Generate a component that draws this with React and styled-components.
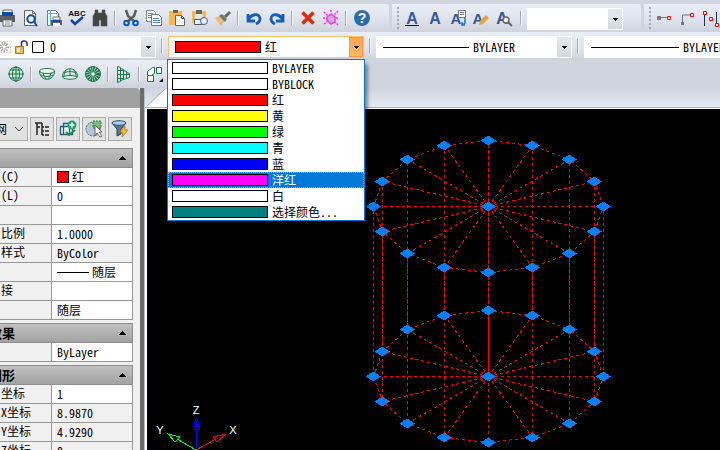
import React from "react";
import styled, { createGlobalStyle, css } from "styled-components";

const GlobalStyle = createGlobalStyle`
  * {
    box-sizing: border-box;
  }
  body {
    margin: 0;
    overflow: hidden;
  }
  body, button, input, select {
    color: #000;
    font-family: "Noto Sans CJK SC", "Liberation Sans", sans-serif;
    font-size: 12px;
    line-height: 16px;
    font-feature-settings: "hwid";
  }
`;

const Window = styled.div`
  display: flex;
  flex-direction: column;
  height: 100vh;
  overflow: hidden;
  padding-top: 4px;
  background: #d0d4dd;
`;

const Bars = styled.header`
  flex: none;
`;

const BarRow = styled.div`
  display: flex;
  gap: 3px;
  height: 28px;
`;

const Toolbar = styled.div`
  display: flex;
  align-items: center;
  flex: ${(props) => (props.$grow ? "1 0 auto" : "none")};
  height: 28px;
  padding: 0 ${(props) => props.$end || 0}px 0 ${(props) => props.$start || 0}px;
  margin-left: ${(props) => (props.$cut ? "-4px" : "0")};
  border-radius: 0 3px 3px 0;
  background: linear-gradient(#eaeef7, #dde1ea 60%, #ced2dc);
`;

const ToolButton = styled.button`
  display: flex;
  align-items: center;
  justify-content: center;
  flex: none;
  width: 23px;
  height: 24px;
  padding: 0;
  border: 0;
  background: none;
  &:hover {
    background: #ffe2b0;
  }
`;

const Separator = styled.span`
  flex: none;
  width: 2px;
  height: 14px;
  margin: 0 ${(props) => props.$gap || 3}px;
  border-left: 1px solid #a4a8b0;
  border-right: 1px solid #f8fafd;
`;

const Grip = styled.span`
  flex: none;
  width: 2px;
  height: 22px;
  margin: 0 1px 0 5px;
  background: repeating-linear-gradient(#a3a8b3 0 2px, transparent 2px 4px);
`;

const ComboBox = styled.div`
  display: flex;
  align-items: center;
  flex: none;
  position: relative;
  width: ${(props) => props.$width}px;
  height: 22px;
  margin-top: 2px;
  padding-left: 6px;
  border: 1px solid ${(props) => (props.$open ? "#ffbf69" : "#fff")};
  background: #fff;
  gap: 4px;
`;

const Choice = styled.select`
  flex: 1;
  min-width: 0;
  height: 20px;
  padding: 0;
  border: 0;
  outline: 0;
  appearance: none;
  background: transparent;
`;

const ComboArrow = styled.span`
  display: flex;
  align-items: center;
  justify-content: center;
  flex: none;
  width: 14px;
  height: 20px;
  background: linear-gradient(#e6e9f1, #d3d7e1);
  ${(props) =>
    props.$open &&
    css`
      border: 1px solid #ff9640;
      background: linear-gradient(#ffa851, #ffba66);
    `}
`;

const Swatch = styled.span`
  flex: none;
  width: ${(props) => props.$width}px;
  height: 12px;
  border: 1px solid #000;
  background: ${(props) => props.$color};
`;

const LineSample = styled.span`
  flex: none;
  width: ${(props) => props.$width}px;
  height: 1px;
  background: #000;
`;

const ColorMenu = styled.ul`
  position: absolute;
  z-index: 5;
  top: 22px;
  left: -2px;
  width: 198px;
  margin: 0;
  padding: 0;
  border: 1px solid #0078d7;
  background: #fff;
  box-shadow: 4px 4px 3px -1px rgba(0, 0, 0, 0.4);
  list-style: none;
`;

const ColorOption = styled.li`
  display: flex;
  align-items: center;
  gap: 4px;
  height: 16px;
  padding-left: 4px;
  color: ${(props) => (props.$active ? "#fff" : "#000")};
  background: ${(props) => (props.$active ? "#0078d7" : "#fff")};
  outline: ${(props) => (props.$active ? "1px dotted #ff9640" : "none")};
  outline-offset: -1px;
`;

const Workspace = styled.div`
  display: flex;
  flex: 1;
  min-height: 0;
`;

const Panel = styled.aside`
  flex: none;
  width: 144px;
  overflow: hidden;
  border-right: 4px solid #6b6b6b;
  background: #f0f0f0;
`;

const PanelTitle = styled.div`
  height: 20px;
  border-radius: 0 4px 0 0;
  background: #a1a1a1;
`;

const PanelTools = styled.div`
  display: flex;
  gap: 2px;
  padding: 8px 0 7px;
  border-top: 1px solid #fff;
`;

const FilterBox = styled.div`
  display: flex;
  align-items: center;
  width: 28px;
  height: 24px;
  padding-right: 3px;
  border: 1px solid #adadad;
  border-left: 0;
  overflow: hidden;
  background: #e1e1e1;
`;

const FilterChoice = styled(Choice)`
  text-indent: -5px;
`;

const PanelButton = styled.button`
  display: flex;
  align-items: center;
  justify-content: center;
  width: 24px;
  height: 24px;
  padding: 0;
  border: 1px solid #adadad;
  background: #e1e1e1;
`;

const Group = styled.section`
  width: 133px;
  margin-bottom: 3px;
`;

const GroupHead = styled.button`
  display: flex;
  align-items: center;
  justify-content: space-between;
  width: 100%;
  height: 20px;
  padding: 0 6px 0 0;
  border: 1px solid #8e8e8e;
  border-left: 0;
  background: linear-gradient(#c0c0c0, #a2a2a2);
  font-size: 13px;
  font-weight: 700;
  text-indent: -11px;
`;

const Properties = styled.table`
  width: 100%;
  border-spacing: 0;
  table-layout: fixed;
  tr {
    height: 19px;
  }
  th, td {
    height: 19px;
    padding: 0;
    border-bottom: 1px solid #979797;
    font-weight: 400;
    line-height: 16px;
    text-align: left;
    white-space: nowrap;
  }
  th {
    width: 51px;
    padding: 0 0 2px 1px;
  }
  td {
    border-left: 1px solid #979797;
    border-right: 1px solid #979797;
  }
`;

const Value = styled.div`
  display: flex;
  align-items: center;
  gap: 3px;
  height: 18px;
  padding-left: 5px;
  background: ${(props) => (props.$fixed ? "#f0f0f0" : "#fff")};
`;

const ValueInput = styled.input`
  flex: 1;
  min-width: 0;
  height: 18px;
  padding: 0 0 2px;
  border: 0;
  outline: 0;
  background: transparent;
`;

const Sheet = styled.main`
  display: flex;
  flex-direction: column;
  flex: 1;
  min-width: 0;
  padding-left: 3px;
  background: linear-gradient(90deg, #b9bcc3 1px, #fff 1px);
`;

const Tabs = styled.div`
  flex: none;
  height: 21px;
  margin-left: -2px;
  border-bottom: 1px solid #fff;
  background: linear-gradient(#d0d4dd, #e6eaf3);
  box-shadow: inset 0 -1px #a9aeb6;
`;

const Canvas = styled.svg`
  display: block;
  flex: 1;
  width: 100%;
  min-height: 0;
  background: #000;
  overflow: hidden;
`;

const Icon = ({ children, size = 18 }) => (
  <svg width={size} height={size} viewBox="0 0 18 18" fill="none" aria-hidden="true">
    {children}
  </svg>
);

const BLUE = "#0b4fa8";
const GREEN = "#1b7a45";

const DownArrow = () => (
  <svg width="5" height="3" aria-hidden="true" shapeRendering="crispEdges">
    <path d="M0 0h5L2.5 3z" fill="#000" />
  </svg>
);

const Letter = ({ x = 9, size = 17 }) => (
  <text x={x} y="15" fill="#3459a3" fontSize={size} fontWeight="700" textAnchor="middle" fontFamily="Liberation Sans, sans-serif">
    A
  </text>
);

const standardTools = [
  ["打印", <><path d="M4 1h9v4H4z" fill="#fff" stroke="#666" /><path d="M1 6h15v7H1z" fill="#5b5f63" /><path d="M3 3h11v4H3z" fill={BLUE} /><path d="M4 11h9v6H4z" fill="#fff" stroke="#666" /><path d="M6 13h5m-5 2h5" stroke="#8b8f94" /></>],
  ["预览", <><path d="M2.5 1.5h8l3 3v12h-11z" fill="#fff" stroke="#666" /><path d="M10.500 1.500v3h3" stroke="#666" /><circle cx="9" cy="10" r="3.700" stroke={BLUE} strokeWidth="2" fill="#eef4fc" /><path d="M12 13l3 4" stroke={BLUE} strokeWidth="2" /></>],
  ["打印设置", <><path d="M2.500 1.500h8l3 3v12h-11z" fill="#fff" stroke="#777" /><path d="M5.500 1v16M2 4.500h10" stroke="#4bb8de" /><path d="M8 8h7v3H8z" fill="#fff" stroke="#666" /><path d="M6 11h11v5H6z" fill="#5b5f63" /><path d="M8 11h7v2H8z" fill={BLUE} /><path d="M8 14h7v3H8z" fill="#fff" /></>],
  ["拼写检查", <><text x="9" y="7" fontSize="8" fontWeight="700" textAnchor="middle" fill="#111" fontFamily="Liberation Sans, sans-serif">ABC</text><path d="M3 11l4 4 8-7" stroke="#123fb2" strokeWidth="2.500" /></>],
  ["查找", <path d="M4 1h3v3h4V1h3v3l2 3v10h-6v-6H8v6H2V7l2-3zM4 8v6m10-6v6" fill="#444" stroke="#555" strokeWidth=".6" />],
  null,
  ["剪切", <><path d="M4 1l2 6 7 6M14 1l-2 6-7 6" stroke="#5c5c5c" strokeWidth="2.500" /><circle cx="4.500" cy="14" r="2.300" stroke="#0b5ac0" strokeWidth="2" /><circle cx="13.500" cy="14" r="2.300" stroke="#0b5ac0" strokeWidth="2" /></>],
  ["复制", <><path d="M1.500 1.500h7l2 2v9h-9z" fill="#fff" stroke="#888" /><path d="M3 4.500h5m-5 2h5m-5 2h4" stroke="#4f89c4" /><path d="M6.500 5.500h7l3 3v8h-10z" fill="#fff" stroke="#777" /><path d="M8 9.500h6m-6 2h7m-7 2h7" stroke="#4f89c4" /></>],
  ["粘贴", <><path d="M1 2h13v14H1z" fill="#fbb74a" /><path d="M5 1h5v3H5z" fill="#666" /><path d="M7.500 6.500h6l3 3v7h-9z" fill="#fff" stroke="#666" /><path d="M13.500 6.500v3h3" stroke="#666" /></>],
  ["选择性粘贴", <><path d="M2.500 14V3.500h11V8" stroke="#fbb030" strokeWidth="2.500" /><path d="M5 1h6v4H5z" fill="#666" /><path d="M3.500 10.500h8v5h-8z" fill="#e8f0fb" stroke="#555" /><circle cx="13" cy="12" r="3.500" fill="#e8f0fb" stroke="#315fa5" /></>],
  ["格式刷", <><path d="M1 9l4-2 6 5-4 5z" fill="#efbd75" /><path d="M5 7l3-2 5 5-2 3z" fill="#777" /><path d="M10 7l5-5 2 2-5 5z" fill="#666" /></>],
  null,
  ["撤销", <path d="M3 5v7h7M3 12c2-7 12-9 12-2 0 3-2 4-4 5" stroke="#1260b8" strokeWidth="2.800" />],
  ["重做", <path d="M15 5v7H8m7 0C13 5 3 3 3 10c0 3 2 4 4 5" stroke="#1260b8" strokeWidth="2.800" />],
  null,
  ["删除", <path d="M3.500 3.500l11 11m0-11l-11 11" stroke="#df2b0b" strokeWidth="3.600" />],
  ["清除", <><path d="M5 8l4-3 4 3v5l-4 2-4-4z" fill="#d6a8dc" stroke="#f238e6" strokeWidth="1.500" /><path d="M2 3l4 4M16 2l-4 4M2 15l4-3m10 4l-4-4M9 1v3M1 9h3m10 0h3" stroke="#ff30f0" strokeWidth="1.500" strokeDasharray="2 1" /></>],
  null,
  ["帮助", <><circle cx="9" cy="9" r="8" fill="#2c6da8" /><text x="9" y="14" fontSize="14" fontWeight="700" textAnchor="middle" fill="#fff" fontFamily="Liberation Sans, sans-serif">?</text></>],
];

const textTools = [
  ["文字样式", <><Letter x={9} size={16} /><path d="M2 16.500h14" stroke="#111" /></>],
  ["文字", <Letter size={16} />],
  ["多行文字", <><Letter x={7} size={15} /><path d="M9.500 1.500h7v7h-7z" fill="#fff" stroke="#777" /><path d="M11 3.500h4m-4 2h4" stroke="#777" /><path d="M16 9v5l-3 2m0-3v3h3" stroke="#147bc8" strokeWidth="1.500" /></>],
  ["编辑文字", <><Letter x={6} size={15} /><path d="M7 16l1-4 6-6 3 3-6 6z" fill="#e9a13c" /></>],
  ["查找文字", <><Letter x={7} size={16} /><circle cx="11" cy="11" r="3" fill="#eef2f8" stroke="#666" strokeWidth="1.500" /><path d="M13 13l4 4" stroke="#666" strokeWidth="2" /></>],
];

const dimensionTools = [
  ["线性标注", <><path d="M4 8.500h9" stroke="#777" /><path d="M2 7h4v4H2z" fill="#777" /><path d="M12.500 7.500h3v3h-3z" fill="#fff" stroke="red" /></>],
  ["坐标标注", <><path d="M4.500 14V6h9" stroke="#777" /><path d="M3 13h3v3H3z" fill="#777" /><path d="M12.500 4.500h3v3h-3z" fill="#fff" stroke="red" /></>],
  ["对齐标注", <><path d="M3.500 3v14m12-14v12" stroke="#173052" /><path d="M2.500 2.500h3v3h-3zm6 6h3v3h-3zm6 6h3v3h-3z" fill="#fff" stroke="red" /></>],
];

const meshTools = [
  ["球面", <g stroke={GREEN}><circle cx="9" cy="9" r="7" fill="#d5eadf" /><ellipse cx="9" cy="9" rx="3.500" ry="7" /><path d="M9 1v16M1 9h16M3 5h12M3 13h12" /></g>],
  null,
  ["下半球面", <g stroke={GREEN}><ellipse cx="9" cy="6" rx="7.500" ry="2.500" fill="#f3faf6" /><path d="M1.500 6c0 11 15 11 15 0M5 8c1 3 2 5 3 6m5-6c-1 3-2 5-3 6M3 10c4 2 8 2 12 0" /></g>],
  ["上半球面", <g stroke={GREEN}><path d="M1.500 12c0-11 15-11 15 0M9 4v7M5 5c-1 2-2 4-2 6m10-6c1 2 2 4 2 6M3 8c4-2 8-2 12 0" /><path d="M1.500 12c2 3 13 3 15 0-4-2-11-2-15 0z" fill="#e7f3ec" /></g>],
  ["圆环", <g stroke={GREEN}><circle cx="9" cy="9" r="5" strokeWidth="5" strokeDasharray="1.500 .6" /><circle cx="9" cy="9" r="7.500" /><circle cx="9" cy="9" r="2.300" fill="#fff" /></g>],
  null,
  ["网格", <g stroke={GREEN}><path d="M2.500 1.500l3 1v14l-3 1zM5.500 3.500l3 1v10l-3 1M8.500 5.500l3 1v7l-3 1M11.500 7.500l3 1v4l-3 1M2.500 5.500h6M2.500 9.500h12M2.500 13.500h6" /></g>],
  null,
  ["移动面", <><path d="M1.500 10.500h6v6h-6zm0 0v-4l5-4h2v6l-3 2M10.500 2.500h5v6h-5z" fill="#fff" stroke={GREEN} /><path d="M17 13v4h-4z" fill="#111" /></>],
];

const panelTools = [
  ["树形列表", <path d="M2 3h7M4 3v12M9 3v12M4 7h3m2 0h2m1 0h4M9 11h2m1 0h4M9 15h2m1 0h4" stroke="#222" strokeWidth="1.500" />],
  ["添加选择", <><path d="M1.500 6.500h9v8h-9zM4.500 3.500h9v11h-9z" fill="#e8f2f5" stroke="#245b78" strokeWidth="1.300" /><circle cx="13" cy="5" r="4.500" fill="#20a464" /><path d="M13 2.500v5M10.500 5h5" stroke="#fff" strokeWidth="1.500" /><path d="M7 12l3 3 6-5" stroke="#12944f" strokeWidth="2" /></>],
  ["选择对象", <><circle cx="8" cy="9" r="7" fill="#b2c3dc" stroke="#55667d" strokeDasharray="2 1" /><path d="M8 1h8v7H8z" fill="#7abf76" stroke="#357639" strokeDasharray="2 1" /><path d="M10 5v11l2-3 3 4 2-1-3-4h3z" fill="#fff" stroke="#666" /></>],
  ["快速选择", <><path d="M1 3l5 6v7l4-2V9l5-6z" fill="#4d789e" stroke="#28445c" /><ellipse cx="8" cy="3" rx="7" ry="2.300" fill="#a7cce7" stroke="#33536d" /><path d="M14 6l-5 6h3l-1 5 6-7h-3z" fill="#ffc72d" stroke="#d37b0e" /></>],
];

const colors = [
  ["BYLAYER", "#fff"],
  ["BYBLOCK", "#fff"],
  ["红", "#f00"],
  ["黄", "#ff0"],
  ["绿", "#0f0"],
  ["青", "#0ff"],
  ["蓝", "#00f"],
  ["洋红", "#f0f"],
  ["白", "#fff"],
  ["选择颜色...", "#008080"],
];

const groups = [
  {
    title: "",
    rows: [
      { label: "(C)", value: "红", color: "#f00" },
      { label: "(L)", value: "0" },
      { label: "", value: "" },
      { label: "比例", value: "1.0000" },
      { label: "样式", value: "ByColor", fixed: true },
      { label: "", value: "随层", line: true },
      { label: "接", value: "" },
      { label: "", value: "随层" },
    ],
  },
  { title: "效果", rows: [{ label: "", value: "ByLayer" }] },
  {
    title: "图形",
    rows: [
      { label: "坐标", value: "1" },
      { label: "X坐标", value: "8.9870", fixed: true },
      { label: "Y坐标", value: "4.9290", fixed: true },
      { label: "Z坐标", value: "0", fixed: true },
    ],
  },
];

const Tools = ({ items }) =>
  items.map((item, i) =>
    item ? (
      <ToolButton key={i} type="button" aria-label={item[0]}>
        <Icon>{item[1]}</Icon>
      </ToolButton>
    ) : (
      <Separator key={i} />
    )
  );

function Combo({ label, value, width, open, before, children }) {
  return (
    <ComboBox $width={width} $open={open}>
      {before}
      <Choice aria-label={label} defaultValue={value}>
        <option>{value}</option>
      </Choice>
      <ComboArrow $open={open}>
        <DownArrow />
      </ComboArrow>
      {children}
    </ComboBox>
  );
}

function PropertyGroup({ title, rows, id }) {
  return (
    <Group>
      <GroupHead type="button" aria-label={title || "常规"}>
        <span>{title}</span>
        <svg width="7" height="4" aria-hidden="true" shapeRendering="crispEdges">
          <path d="M0 4h7L3.500 0z" fill="#000" />
        </svg>
      </GroupHead>
      <Properties>
        <tbody>
          {rows.map((row, i) => (
            <tr key={i}>
              <th scope="row">
                <label htmlFor={`${id}-${i}`}>{row.label}</label>
              </th>
              <td>
                <Value $fixed={row.fixed}>
                  {row.color && <Swatch $width={12} $color={row.color} />}
                  {row.line && <LineSample $width={32} />}
                  <ValueInput id={`${id}-${i}`} defaultValue={row.value} readOnly={row.fixed} />
                </Value>
              </td>
            </tr>
          ))}
        </tbody>
      </Properties>
    </Group>
  );
}

const CX = 341;
const TOP = 97;
const BOTTOM = 267;
const ring = Array.from({ length: 16 }, (_, i) => {
  const a = (i * Math.PI) / 8;
  return [Math.round(115 * Math.cos(a)), Math.round(66 * Math.sin(a))];
});

// One end face of the cylinder: rim segments and spokes
const Face = ({ cy }) =>
  ring.map(([x, y], i) => {
    const [nx, ny] = ring[(i + 1) % 16];
    return (
      <path key={i} d={`M${CX} ${cy}l${x} ${y}L${CX + nx} ${cy + ny}`} strokeDasharray="3 3" />
    );
  });

const Grips = ({ cy }) =>
  [[0, 0], ...ring].map(([x, y], i) => (
    <path key={i} d={`M${CX + x - 7} ${cy + y}l7-5 8 5-8 5z`} />
  ));

function Drawing() {
  return (
    <Canvas role="img" aria-label="圆柱体">
      <g transform="translate(.5 .5)" stroke="red" fill="none" shapeRendering="crispEdges">
        <Face cy={TOP} />
        <Face cy={BOTTOM} />
      </g>
      <g transform="translate(.5 0)" stroke="red" fill="none">
        {ring.map(([x, y], i) => (
          <path
            key={i}
            d={`M${CX + x} ${TOP + y}V${BOTTOM + y}`}
            strokeDasharray="3 3"
            strokeDashoffset={(TOP + y + (y > 0 ? 2 : 0)) % 6}
          />
        ))}
      </g>
      <g transform="translate(0 .5)" fill="#0080ff" shapeRendering="crispEdges">
        <Grips cy={TOP} />
        <Grips cy={BOTTOM} />
      </g>
      <g fill="none" shapeRendering="crispEdges">
        <path d="M49.500 341v-29m-3 5l3-8 3 8zm0 0v3h6v-3" stroke="#00f" />
        <path d="M49 341l20-11m-3-2l13-3-9 8zl4 5" stroke="red" />
        <path d="M49 341l-19-11m3-2l-12-3 7 8zl-5 5" stroke="#0f0" />
      </g>
      <g fill="#fff" fontSize="11" textAnchor="middle" fontFamily="Liberation Sans, sans-serif">
        <text x="49" y="305">Z</text>
        <text x="86" y="325">X</text>
        <text x="13" y="325">Y</text>
      </g>
    </Canvas>
  );
}

const LayerArt = styled.svg`
  flex: none;
  margin-left: -7px;
`;

const LayerIcons = () => (
  <LayerArt width="46" height="16" fill="none" aria-hidden="true">
    <path d="M0 2.500h10.500v11H0" stroke="#ccc" strokeDasharray="2 1" />
    <circle cx="4" cy="8" r="3" stroke="#999" strokeWidth="4" strokeDasharray="1 1" />
    <path d="M15.500 7.500h8v7h-8z" fill="#e4bd62" stroke="#a77620" />
    <path d="M17 9h3v4h-3z" fill="#fff0c0" />
    <path d="M21.500 7V4q0-2 2.500-2t3 2v3" stroke="#292978" strokeWidth="1.500" />
    <path d="M32.500 2.500h11v11h-11z" fill="#fff" stroke="#000" />
  </LayerArt>
);

export default function App() {
  return (
    <Window>
      <GlobalStyle />
      <Bars>
        <BarRow>
          <Toolbar $cut $end={16}>
            <Tools items={standardTools} />
          </Toolbar>
          <Toolbar $end={18}>
            <Grip />
            <Tools items={textTools} />
            <Separator $gap={5} />
            <Combo label="文字高度" value="" width={96} />
          </Toolbar>
          <Toolbar $grow>
            <Grip />
            <Tools items={dimensionTools} />
          </Toolbar>
        </BarRow>
        <BarRow>
          <Toolbar $grow>
            <Combo label="图层" value="0" width={156} before={<LayerIcons />} />
            <Separator $gap={5} />
            <Combo
              label="颜色"
              value="红"
              width={196}
              open
              before={<Swatch $width={86} $color="#f00" />}
            >
              <ColorMenu role="listbox" aria-label="颜色">
                {colors.map(([name, color]) => (
                  <ColorOption
                    key={name}
                    role="option"
                    aria-selected={name === "洋红"}
                    $active={name === "洋红"}
                  >
                    <Swatch $width={96} $color={color} />
                    {name}
                  </ColorOption>
                ))}
              </ColorMenu>
            </Combo>
            <Separator $gap={5} />
            <Combo label="线型" value="BYLAYER" width={196} before={<LineSample $width={86} />} />
            <Separator $gap={5} />
            <Combo label="线宽" value="BYLAYER" width={196} before={<LineSample $width={88} />} />
          </Toolbar>
        </BarRow>
        <BarRow>
          <Toolbar $start={4} $end={4}>
            <Tools items={meshTools} />
          </Toolbar>
        </BarRow>
      </Bars>
      <Workspace>
        <Panel>
          <PanelTitle />
          <PanelTools>
            <FilterBox>
              <FilterChoice aria-label="对象类型" defaultValue="网">
                <option>网</option>
              </FilterChoice>
              <svg width="10" height="6" fill="none" aria-hidden="true">
                <path d="M1 1l4 4 4-4" stroke="#444" />
              </svg>
            </FilterBox>
            {panelTools.map(([name, art]) => (
              <PanelButton key={name} type="button" aria-label={name}>
                <Icon>{art}</Icon>
              </PanelButton>
            ))}
          </PanelTools>
          {groups.map((group, i) => (
            <PropertyGroup key={i} id={`group${i}`} {...group} />
          ))}
        </Panel>
        <Sheet>
          <Tabs>
            <svg width="40" height="19" aria-hidden="true">
              <path d="M2 19L20 1h20v18z" fill="#fff" />
              <path d="M2 18L20 1" stroke="#a9aeb6" />
            </svg>
          </Tabs>
          <Drawing />
        </Sheet>
      </Workspace>
    </Window>
  );
}
